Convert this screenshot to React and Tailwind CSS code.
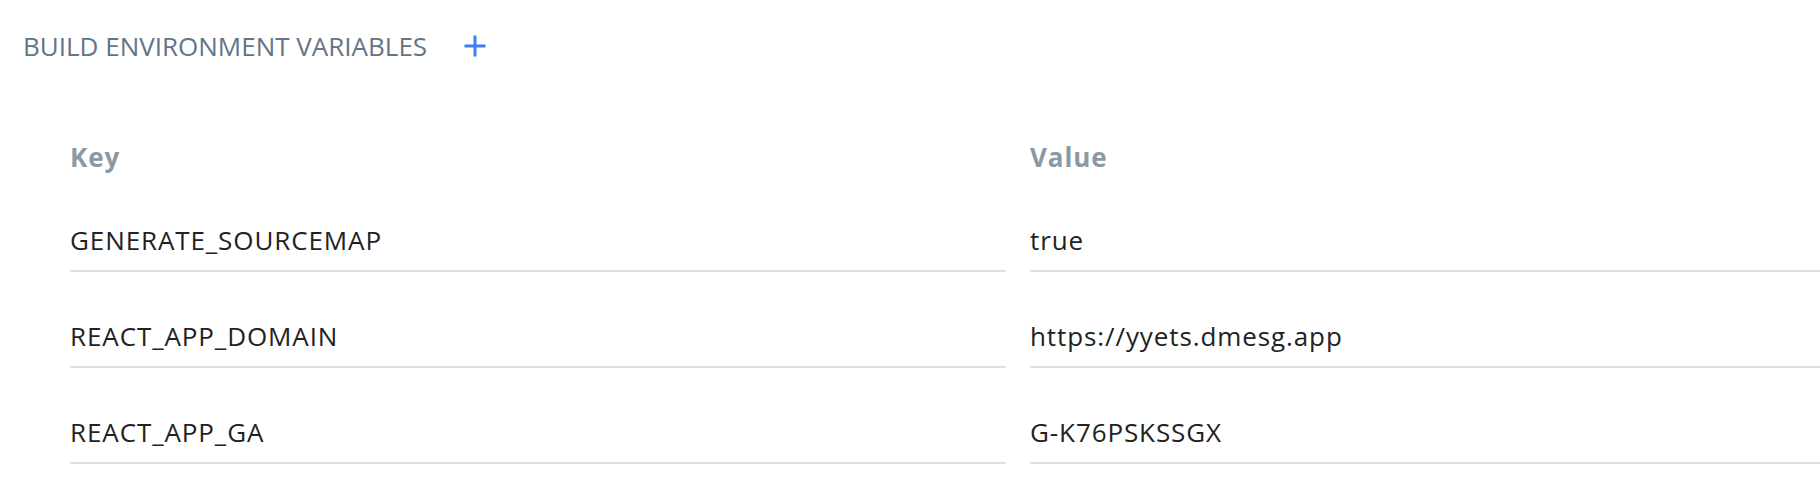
import React from 'react';

const vars = [
  { key: 'GENERATE_SOURCEMAP', value: 'true' },
  { key: 'REACT_APP_DOMAIN', value: 'https://yyets.dmesg.app' },
  { key: 'REACT_APP_GA', value: 'G-K76PSKSSGX' },
];

function PlusIcon() {
  return (
    <svg width="22" height="22" viewBox="0 0 22 22" className="text-[#3b7ff0]">
      <path d="M11 0.5v21M0.5 11h21" stroke="currentColor" strokeWidth="3" fill="none" />
    </svg>
  );
}

export default function App() {
  return (
    <div className="w-[1820px] h-[478px] overflow-hidden bg-white font-['Open_Sans',sans-serif] text-[26px] leading-[36px]">
      {/* section title */}
      <div className="flex items-center pt-[28px] pl-[23px]">
        <span className="text-[#637586]">BUILD ENVIRONMENT VARIABLES</span>
        <button className="ml-[37px] flex items-center">
          <PlusIcon />
        </button>
      </div>

      <div className="pl-[70px] pt-[75px] tracking-[0.9px]">
        <div className="flex gap-[24px] font-bold text-[#8a99a6]">
          <div className="w-[936px] shrink-0">Key</div>
          <div className="flex-1">Value</div>
        </div>

        <div className="pt-[1px]">
          {vars.map((v) => (
            <div key={v.key} className="flex gap-[24px] text-[#222222]">
              <div className="w-[936px] shrink-0 pt-[46px] pb-[12px] border-b-2 border-[#e0e0e0]">
                {v.key}
              </div>
              <div className="flex-1 pt-[46px] pb-[12px] border-b-2 border-[#e0e0e0]">
                {v.value}
              </div>
            </div>
          ))}
        </div>
      </div>
    </div>
  );
}
